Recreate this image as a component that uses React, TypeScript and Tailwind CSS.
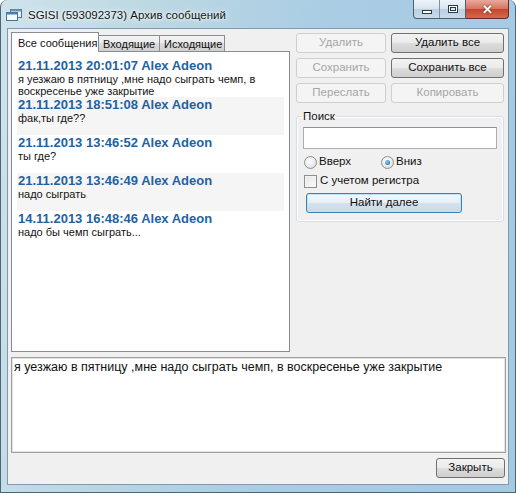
import React from 'react';
import clsx from 'clsx';

const messages = [
  {
    head: '21.11.2013 20:01:07 Alex Adeon',
    lines: ['я уезжаю в пятницу ,мне надо сыграть чемп, в', 'воскресенье уже закрытие'],
  },
  { head: '21.11.2013 18:51:08 Alex Adeon', lines: ['фак,ты где??'] },
  { head: '21.11.2013 13:46:52 Alex Adeon', lines: ['ты где?'] },
  { head: '21.11.2013 13:46:49 Alex Adeon', lines: ['надо сыграть'] },
  { head: '14.11.2013 16:48:46 Alex Adeon', lines: ['надо бы чемп сыграть...'] },
];

function Btn({
  children,
  disabled,
  className,
}: {
  children: React.ReactNode;
  disabled?: boolean;
  className?: string;
}) {
  return (
    <button
      disabled={disabled}
      className={clsx(
        'flex h-[20px] items-center justify-center whitespace-nowrap rounded-[3px] border text-[11.5px] leading-none',
        disabled
          ? 'border-[#cfcfcf] bg-[#f4f4f4] text-[#a6a6a6]'
          : 'border-[#707070] bg-[linear-gradient(#f2f2f2,#ebebeb_50%,#dddddd_50%,#cfcfcf)] text-[#111]',
        className
      )}
    >
      {children}
    </button>
  );
}

function TitleIcon() {
  return (
    <svg width="16" height="12" viewBox="0 0 16 12">
      <rect x="4.5" y="0.5" width="11" height="8" fill="#e8f1f8" stroke="#50708f" />
      <rect x="4.5" y="0.5" width="11" height="2" fill="#6f95b8" />
      <rect x="0.5" y="3.5" width="11" height="8" fill="#f4f8fb" stroke="#50708f" />
      <rect x="0.5" y="3.5" width="11" height="2" fill="#4f7eaa" />
    </svg>
  );
}

export default function App() {
  return (
    <div className="flex h-[493px] w-[516px] flex-col overflow-hidden rounded-t-[7px] border-x border-b border-[#4d6479] bg-[linear-gradient(100deg,#cfe3ea_0%,#bcd8e2_25%,#aacde4_55%,#a3c9e3_100%)] font-['Liberation_Sans',Arial,sans-serif] text-[#111]">
      {/* Title bar */}
      <div className="flex h-[28px] items-start">
        <div className="flex items-center pl-[5px] pt-[8px]">
          <TitleIcon />
          <span className="ml-[6px] whitespace-nowrap text-[11.5px] leading-[14px] text-[#151515] [text-shadow:0_0_7px_#fff,0_0_3px_#fff]">
            SGISI (593092373) Архив сообщений
          </span>
        </div>
        <div className="ml-auto mr-[6px] flex h-[19px]">
          <div className="flex overflow-hidden rounded-bl-[4px] border-x border-b border-[#4b5f73] bg-[linear-gradient(#eef4f9,#d6e3ee_50%,#bccfe0_50%,#c9dbea)]">
            <div className="flex w-[26px] items-center justify-center border-r border-[#7d91a5]">
              <div className="mt-[5px] h-[4px] w-[10px] border border-[#2c3b4a] bg-white" />
            </div>
            <div className="flex w-[25px] items-center justify-center">
              <div className="h-[8px] w-[10px] border border-[#2c3b4a] bg-white">
                <div className="m-[1px] h-[4px] border border-[#2c3b4a] bg-[#dfe8f0]" />
              </div>
            </div>
          </div>
          <div className="flex w-[43px] items-center justify-center rounded-br-[4px] border-b border-r border-[#6b2a20] bg-[linear-gradient(#e9a99c,#d5725f_50%,#c4432c_50%,#d5694f)] text-[13px] font-bold leading-none text-white [text-shadow:0_0_2px_#4a1208]">
            ✕
          </div>
        </div>
      </div>

      {/* Client area */}
      <div className="mx-[6px] flex h-[457px] flex-col border border-[#7f99b1] bg-[#f0f0f0]">
        <div className="flex items-start">
          {/* Tab control */}
          <div className="ml-[3px] mt-[3px] flex w-[279px] flex-col">
            <div className="flex h-[19px] items-start whitespace-nowrap text-[11px] leading-[14px]">
              <div className="relative z-10 h-[20px] w-[88px] border-x border-t border-[#898c95] bg-white pl-[6px] pt-[3px]">
                Все сообщения
              </div>
              <div className="mt-[3px] h-[16px] w-[61px] border-r border-t border-[#898c95] bg-[linear-gradient(#f3f3f3,#ebebeb_50%,#dddddd_50%,#cfcfcf)] pl-[4px] pt-[1px]">
                Входящие
              </div>
              <div className="mt-[3px] h-[16px] w-[65px] border-r border-t border-[#898c95] bg-[linear-gradient(#f3f3f3,#ebebeb_50%,#dddddd_50%,#cfcfcf)] pl-[4px] pt-[1px]">
                Исходящие
              </div>
            </div>
            <div className="h-[301px] border border-[#898c95] bg-white px-[5px] pt-[6px]">
              {messages.map((m, i) => (
                <div
                  key={i}
                  className={clsx('min-h-[38px] pl-[1px] pt-[1px]', i % 2 === 1 && 'bg-[#f5f5f5]')}
                >
                  <div className="whitespace-nowrap text-[13px] font-bold leading-[14px] text-[#1f62a2]">
                    {m.head}
                  </div>
                  {m.lines.map((l, j) => (
                    <div key={j} className="whitespace-nowrap text-[11px] leading-[12px] text-[#141414]">
                      {l}
                    </div>
                  ))}
                </div>
              ))}
            </div>
          </div>

          {/* Right column */}
          <div className="ml-[6px] mt-[4px] flex w-[208px] flex-col">
            <div className="flex gap-[5px]">
              <Btn disabled className="w-[90px]">Удалить</Btn>
              <Btn className="w-[113px]">Удалить все</Btn>
            </div>
            <div className="mt-[5px] flex gap-[5px]">
              <Btn disabled className="w-[90px]">Сохранить</Btn>
              <Btn className="w-[113px]">Сохранить все</Btn>
            </div>
            <div className="mt-[5px] flex gap-[5px]">
              <Btn disabled className="w-[90px]">Переслать</Btn>
              <Btn disabled className="w-[113px]">Копировать</Btn>
            </div>

            <fieldset className="mt-[6px] w-[208px] rounded-[3px] border border-[#d5dfe5] px-[6px] pb-[8px] shadow-[inset_0_0_0_1px_#fff]">
              <legend className="ml-[-1px] px-[1px] text-[11.5px] leading-[14px]">Поиск</legend>
              <div className="mt-[4px] h-[22px] w-[194px] border border-[#abadb3] border-t-[#8e9196] bg-white" />
              <div className="mt-[6px] flex h-[14px] items-center whitespace-nowrap text-[11.5px]">
                <div className="flex w-[78px] items-center">
                  <span className="ml-[1px] h-[13px] w-[13px] rounded-full border border-[#8e8f8f] bg-[radial-gradient(circle_at_40%_35%,#ffffff,#d8d8d8)]" />
                  <span className="ml-[2px]">Вверх</span>
                </div>
                <div className="flex items-center">
                  <span className="flex h-[13px] w-[13px] items-center justify-center rounded-full border border-[#8e8f8f] bg-[radial-gradient(circle_at_40%_35%,#ffffff,#d8d8d8)]">
                    <span className="h-[5px] w-[5px] rounded-full bg-[radial-gradient(circle_at_35%_35%,#8fd0f5,#1a5fa0)]" />
                  </span>
                  <span className="ml-[2px]">Вниз</span>
                </div>
              </div>
              <div className="mt-[5px] flex h-[14px] items-center whitespace-nowrap text-[11.5px]">
                <span className="ml-[1px] h-[13px] w-[13px] border border-[#8e8f8f] bg-[linear-gradient(135deg,#e6e6e6,#fbfbfb)] shadow-[inset_0_0_0_1px_#f4f4f4]" />
                <span className="ml-[3px]">С учетом регистра</span>
              </div>
              <button className="ml-[3px] mt-[5px] flex h-[20px] w-[156px] items-center justify-center rounded-[3px] border border-[#3c7fb1] bg-[linear-gradient(#f4f8fb,#e6eef5_50%,#d5e2ec_50%,#c9d9e6)] text-[11.5px] leading-none text-[#111] shadow-[inset_0_0_0_1px_#bfe3f7]">
                Найти далее
              </button>
            </fieldset>
          </div>
        </div>

        {/* Preview textarea */}
        <div className="ml-[3px] mt-[5px] h-[96px] w-[495px] border border-[#a0a0a0] bg-white pl-[2px] pt-[2px] text-[12.5px] leading-[14px] shadow-[inset_0_0_0_1px_#e3e3e3]">
          я уезжаю в пятницу ,мне надо сыграть чемп, в воскресенье уже закрытие
        </div>

        <div className="mt-[5px] flex justify-end pr-[3px]">
          <Btn className="w-[69px]">Закрыть</Btn>
        </div>
      </div>
    </div>
  );
}
